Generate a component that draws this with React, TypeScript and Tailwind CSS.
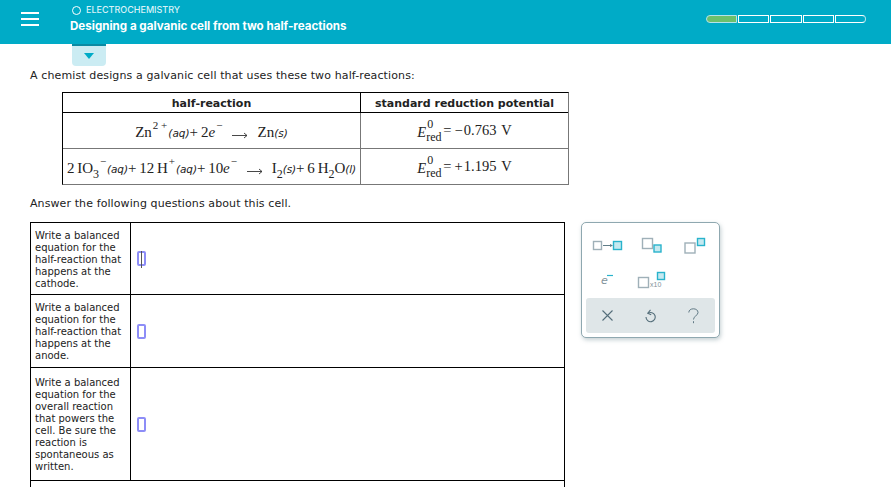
import { ReactNode } from "react";

const serif = "font-['Liberation_Serif',serif]";

function Sup({ children }: { children: ReactNode }) {
  return <span className={`${serif} text-[11px] leading-none align-[8px] mx-[1px]`}>{children}</span>;
}

function Sub({ children }: { children: ReactNode }) {
  return <span className={`${serif} text-[12px] leading-none align-[-5px]`}>{children}</span>;
}

function State({ children }: { children: ReactNode }) {
  return <span className="font-['DejaVu_Sans',sans-serif] italic text-[10.5px]">{children}</span>;
}

function Arrow() {
  return (
    <svg width="16" height="7" viewBox="0 0 16 7" className="inline-block mx-[9px] align-[-2px]">
      <path d="M0 3.5H15M12 1l3 2.5-3 2.5" fill="none" stroke="#333" strokeWidth="0.9" />
    </svg>
  );
}

function Potential({ value }: { value: string }) {
  return (
    <div className={`${serif} text-[14.5px] text-[#222] flex items-center justify-center pt-[1px]`}>
      <span className="relative w-[26px] h-[26px] shrink-0">
        <span className="italic absolute left-0 top-[4px]">E</span>
        <span className="text-[12px] absolute left-[10px] top-[-3px]">0</span>
        <span className="text-[12px] absolute left-[9px] top-[10px]">red</span>
      </span>
      <span className="whitespace-pre">{value}</span>
    </div>
  );
}

function Box({ active }: { active?: boolean }) {
  return (
    <span className="relative inline-block w-[9px] h-[15px] border-2 border-[#8d8df7] rounded-[2px]">
      {active && <span className="absolute left-[1.5px] top-[-2px] w-px h-[17px] bg-[#555]" />}
    </span>
  );
}

function Row({ h, text, active }: { h: string; text: ReactNode; active?: boolean }) {
  return (
    <div className={`flex border-b border-black ${h}`}>
      <div className="w-[100px] shrink-0 border-r border-black pl-[4px] pt-[2px] flex items-center text-[10px] leading-[12px] text-[#222]">
        <span>{text}</span>
      </div>
      <div className="flex items-center pl-[6px]">
        <Box active={active} />
      </div>
    </div>
  );
}

function Palette() {
  const grey = "#9fb0b8";
  const blue = "#29b3cc";
  const fill = "#c5e9f0";
  return (
    <div className="w-[139px] h-[116px] rounded-[5px] border border-[#8fa8b0] bg-white shadow-[1px_2px_4px_rgba(90,120,130,0.35)] px-[4px] pb-[4px] flex flex-col justify-end">
      <svg width="129" height="73" viewBox="0 0 129 73">
        <rect x="7.5" y="16.5" width="8" height="8" fill="none" stroke={grey} strokeWidth="1.4" />
        <path d="M17 20.5H26" stroke="#607d88" strokeWidth="1" />
        <path d="M24 19l3 1.5-3 1.5z" fill="#607d88" />
        <rect x="27.5" y="16.5" width="8" height="8" fill={fill} stroke={blue} strokeWidth="1.4" />
        <rect x="56.5" y="13.5" width="10" height="10" fill="none" stroke={grey} strokeWidth="1.4" />
        <rect x="68" y="20" width="7" height="7" fill={fill} stroke={blue} strokeWidth="1.4" />
        <rect x="99" y="18" width="10" height="10" fill="none" stroke={grey} strokeWidth="1.4" />
        <rect x="111.5" y="13.5" width="7" height="7" fill={fill} stroke={blue} strokeWidth="1.4" />
        <text x="15" y="59" fontSize="11" fontStyle="italic" fill="#7f929a" fontFamily="'DejaVu Sans', sans-serif">e</text>
        <path d="M21 50.5H27" stroke={blue} strokeWidth="1.2" />
        <rect x="52.5" y="52.5" width="10" height="10" fill="none" stroke={grey} strokeWidth="1.4" />
        <text x="64" y="62" fontSize="7" fill="#7f929a" fontFamily="'Liberation Sans', sans-serif">x10</text>
        <rect x="71.5" y="47.5" width="7" height="7" fill={fill} stroke={blue} strokeWidth="1.4" />
      </svg>
      <div className="h-[35px] rounded-[3px] bg-[#dfe6e8] flex items-center justify-between px-[16px] shrink-0">
        <svg width="11" height="11" viewBox="0 0 11 11">
          <path d="M.5.5l10 10M10.5.5l-10 10" stroke="#546e7a" strokeWidth="1.1" fill="none" />
        </svg>
        <svg width="11" height="14" viewBox="0 0 11 14">
          <path d="M3 4.3A4.6 4.6 0 1 1 1 8" stroke="#546e7a" strokeWidth="1.1" fill="none" />
          <path d="M5.5.8L2.8 4.2 6.2 5.8" stroke="#546e7a" strokeWidth="1.1" fill="none" />
        </svg>
        <svg width="11" height="16" viewBox="0 0 11 16">
          <path d="M.8 4.5C.8 2.2 2.8.8 5.4.8s4.6 1.4 4.6 3.7c0 3.2-4.5 3.4-4.5 7M5.5 13.2v2" stroke="#546e7a" strokeWidth="0.9" fill="none" />
        </svg>
      </div>
    </div>
  );
}

export default function App() {
  return (
    <div className="w-[891px] h-[487px] overflow-hidden bg-white font-['DejaVu_Sans',sans-serif]">
      <header className="h-[44px] bg-[#00abc7] flex">
        <div className="w-[70px] shrink-0 pl-[21px] pt-[12px]">
          <div className="w-[18px] flex flex-col gap-[4.5px]">
            <span className="h-[1.5px] bg-white" />
            <span className="h-[1.5px] bg-white" />
            <span className="h-[1.5px] bg-white" />
          </div>
        </div>
        <div className="flex-1 pt-[4px] font-['Inter',sans-serif] text-white">
          <div className="flex items-center h-[12px] pl-[2px] text-[9px] font-medium text-[#d8f2f7]">
            <span className="w-[9px] h-[9px] rounded-full border border-white mr-[5px]" />
            <span>ELECTROCHEMISTRY</span>
          </div>
          <div className="mt-[2px] text-[11.6px] font-bold leading-[16px]">Designing a galvanic cell from two half-reactions</div>
        </div>
        <div className="w-[160px] mr-[25px] mt-[15px] h-[8px] flex gap-[1px]">
          <span className="flex-1 rounded-l-[4px] bg-[#6cc06c] border border-[#b5e3ea]" />
          <span className="flex-1 border border-white" />
          <span className="flex-1 border border-white" />
          <span className="flex-1 border border-white" />
          <span className="flex-1 rounded-r-[4px] border border-white border-r-[#b5e3ea]" />
        </div>
      </header>

      <div className="pl-[72px]">
        <div className="w-[34px] h-[22px] rounded-b-[4px] bg-[#cbecf3] border-t-2 border-[#0a8aa3] flex justify-center pt-[7px]">
          <span className="w-0 h-0 border-x-[5px] border-x-transparent border-t-[6px] border-t-[#00abc7]" />
        </div>
      </div>

      <main className="pl-[30px] text-[#222]">
        <p className="text-[11px] tracking-[0.12px] leading-[14px] mt-[3px]">A chemist designs a galvanic cell that uses these two half-reactions:</p>

        <div className="ml-[32px] mt-[9px] w-[507px] border border-[#777] border-t-black border-l-black">
          <div className="flex h-[20px] border-b border-black text-[11px] font-bold">
            <div className="w-[298px] h-full border-r border-black flex items-center justify-center pt-[4px]">half-reaction</div>
            <div className="flex-1 flex items-center justify-center pt-[4px]">standard reduction potential</div>
          </div>
          <div className="flex h-[36px] border-b border-[#777]">
            <div className="w-[298px] border-r border-[#777] flex items-center justify-center pt-[3px]">
              <span className={`${serif} text-[15px] whitespace-nowrap`}>
                Zn<Sup>2 +</Sup>
                <State>(aq)</State>+&thinsp;2<i>e</i><Sup>&minus;</Sup>
                <Arrow />Zn<State>(s)</State>
              </span>
            </div>
            <div className="flex-1 flex items-center justify-center"><Potential value={"=\u2009−\u200a0.763 \u200aV"} /></div>
          </div>
          <div className="flex h-[35px]">
            <div className="w-[298px] border-r border-[#777] flex items-center justify-center pt-[3px]">
              <span className={`${serif} text-[15px] tracking-[-0.08px] whitespace-nowrap`}>
                2&thinsp;IO<Sub>3</Sub><Sup>&minus;</Sup>
                <State>(aq)</State>+&thinsp;12&thinsp;H<Sup>+</Sup>
                <State>(aq)</State>+&thinsp;10<i>e</i><Sup>&minus;</Sup>
                <Arrow />I<Sub>2</Sub>
                <State>(s)</State>+&thinsp;6&thinsp;H<Sub>2</Sub>O<State>(<i>l</i>)</State>
              </span>
            </div>
            <div className="flex-1 flex items-center justify-center"><Potential value={"=\u2009+\u200a1.195 \u200aV"} /></div>
          </div>
        </div>

        <p className="text-[11px] tracking-[0.1px] leading-[14px] mt-[12px]">Answer the following questions about this cell.</p>

        <div className="flex mt-[11px]">
          <div className="w-[535px] h-[280px] border-t border-l border-r border-black shrink-0">
            <Row h="h-[72px]" active text={<>Write a balanced equation for the half-reaction that happens at the cathode.</>} />
            <Row h="h-[73px]" text={<>Write a balanced equation for the half-reaction that happens at the anode.</>} />
            <Row h="h-[113px]" text={<>Write a balanced equation for the overall reaction that powers the cell. Be sure the reaction is spontaneous as written.</>} />
          </div>
          <div className="ml-[16px]">
            <Palette />
          </div>
        </div>
      </main>
    </div>
  );
}
